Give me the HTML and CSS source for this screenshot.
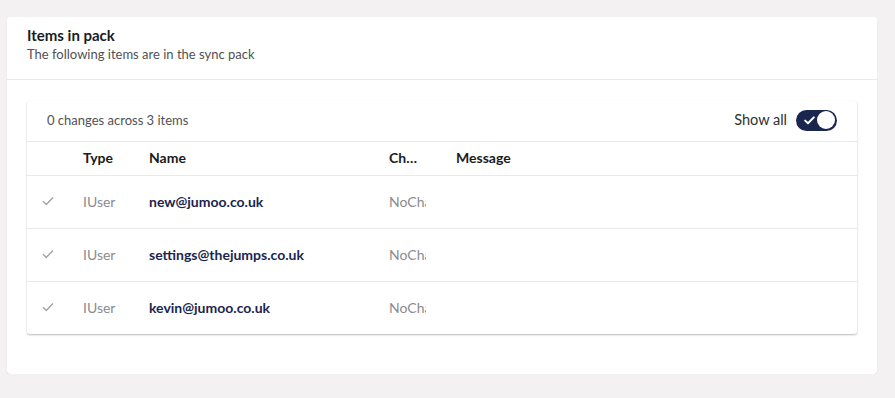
FILE: index.html
```html
<!DOCTYPE html>
<html lang="en">
  <head>
    <meta charset="UTF-8" />
    <meta name="viewport" content="width=device-width, initial-scale=1.0" />
    <title>Items in pack</title>
    <link rel="stylesheet" href="styles.css">
  </head>
  <body>
    <div class="page">
      <!-- Pack card -->
      <div class="card">
        <div class="card-header">
          <div class="card-title">Items in pack</div>
          <div class="card-subtitle">The following items are in the sync pack</div>
        </div>

        <div class="card-body">
          <div class="results">
            <div class="results-bar">
              <span class="summary">0 changes across 3 items</span>
              <label class="show-all">
                <span class="show-all-text">Show all</span>
                <span class="toggle">
                  <svg class="toggle-check" width="11" height="9" viewBox="0 0 11 9">
                    <path d="M1.2 4.6 L4 7.3 L9.8 1.4" fill="none" stroke="#fff" stroke-width="2" stroke-linecap="round" stroke-linejoin="round"/>
                  </svg>
                  <span class="toggle-knob"></span>
                </span>
              </label>
            </div>

            <div class="table">
              <div class="row head">
                <div class="cell"></div>
                <div class="cell">Type</div>
                <div class="cell">Name</div>
                <div class="cell clip">Change</div>
                <div class="cell">Message</div>
              </div>

              <div class="row">
                <div class="cell icon">
                  <svg width="12" height="10" viewBox="0 0 12 10"><path d="M1 5.2 L4.3 8.4 L11 1.4" fill="none" stroke="#a2a1a6" stroke-width="1.4"/></svg>
                </div>
                <div class="cell type">IUser</div>
                <div class="cell name">new@jumoo.co.uk</div>
                <div class="cell"><span class="change">NoChange</span></div>
                <div class="cell"></div>
              </div>

              <div class="row">
                <div class="cell icon">
                  <svg width="12" height="10" viewBox="0 0 12 10"><path d="M1 5.2 L4.3 8.4 L11 1.4" fill="none" stroke="#a2a1a6" stroke-width="1.4"/></svg>
                </div>
                <div class="cell type">IUser</div>
                <div class="cell name">settings@thejumps.co.uk</div>
                <div class="cell"><span class="change">NoChange</span></div>
                <div class="cell"></div>
              </div>

              <div class="row">
                <div class="cell icon">
                  <svg width="12" height="10" viewBox="0 0 12 10"><path d="M1 5.2 L4.3 8.4 L11 1.4" fill="none" stroke="#a2a1a6" stroke-width="1.4"/></svg>
                </div>
                <div class="cell type">IUser</div>
                <div class="cell name">kevin@jumoo.co.uk</div>
                <div class="cell"><span class="change">NoChange</span></div>
                <div class="cell"></div>
              </div>
            </div>
          </div>
        </div>
      </div>
    </div>
  </body>
</html>
```

FILE: styles.css
```css
* {
  margin: 0;
  padding: 0;
  box-sizing: border-box;
}

body {
  background: #f3f1f1;
  font-family: Lato, "Open Sans", sans-serif;
  color: #303033;
}

.page {
  padding: 17px 18px 0 7px;
}

.card {
  background: #fff;
  border-radius: 3px;
  box-shadow: 0 1px 1px rgba(0, 0, 0, 0.16);
}

.card-header {
  padding: 8px 20px 16px;
  border-bottom: 1px solid #e9e9eb;
}

.card-title {
  font-size: 15px;
  font-weight: bold;
  line-height: 20px;
  color: #1b1b1d;
}

.card-subtitle {
  font-size: 13px;
  line-height: 18px;
  color: #515054;
}

.card-body {
  padding: 21px 20px 40px;
}

.results {
  border-radius: 3px;
  box-shadow: 0 1px 2px rgba(0, 0, 0, 0.28);
}

.results-bar {
  height: 41px;
  padding: 0 20px 2px;
  display: flex;
  align-items: center;
  justify-content: space-between;
  border-bottom: 1px solid #e9e9eb;
}

.summary {
  font-size: 13px;
  color: #515054;
}

.show-all {
  display: flex;
  align-items: center;
  gap: 9px;
  font-size: 14.5px;
  color: #303033;
}

.show-all-text {
  margin-bottom: 2px;
}

.toggle {
  width: 41px;
  height: 21px;
  border-radius: 11px;
  background: #1b264f;
  display: flex;
  align-items: center;
  justify-content: space-between;
  padding: 0 2px 0 8px;
}

.toggle-knob {
  width: 18px;
  height: 18px;
  border-radius: 50%;
  background: #fff;
}

.row {
  display: grid;
  grid-template-columns: 46px 66px 240px 67px 1fr;
  align-items: center;
  height: 53px;
  border-bottom: 1px solid #e9e9eb;
  font-size: 14px;
  padding-bottom: 2px;
}

.row:last-child {
  border-bottom: none;
  height: 52px;
}

.row.head {
  height: 34px;
  font-weight: bold;
  color: #1b1b1d;
}

.cell {
  padding-left: 10px;
  white-space: nowrap;
  overflow: hidden;
}

.cell.clip {
  padding-right: 24px;
  text-overflow: ellipsis;
}

.cell.icon {
  padding-left: 15px;
  display: flex;
  align-items: center;
}

.type {
  color: #8c8b8f;
}

.name {
  font-weight: bold;
  color: #1b264f;
}

.change {
  display: block;
  width: 37px;
  overflow: hidden;
  color: #8c8b8f;
}
```
